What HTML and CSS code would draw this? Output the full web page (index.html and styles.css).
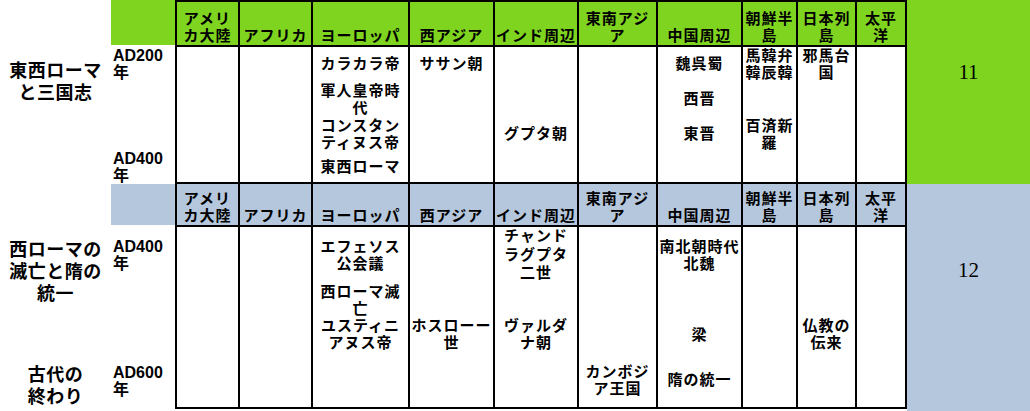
FILE: index.html
```html
<!DOCTYPE html>
<html lang="ja">
<head>
<meta charset="utf-8">
<title>古代の世界年表</title>
<link rel="stylesheet" href="styles.css">
</head>
<body>
<div class="sheet">
  <section class="era era-1">
    <div class="blank"></div>
    <div class="corner"></div>
    <div class="head first">アメリ<br>カ大陸</div>
    <div class="head">アフリカ</div>
    <div class="head">ヨーロッパ</div>
    <div class="head">西アジア</div>
    <div class="head">インド周辺</div>
    <div class="head">東南アジ<br>ア</div>
    <div class="head">中国周辺</div>
    <div class="head">朝鮮半<br>島</div>
    <div class="head">日本列<br>島</div>
    <div class="head">太平<br>洋</div>
    <div class="num">11</div>

    <div class="label top">東西ローマ<br>と三国志</div>
    <div class="year y1">AD200<br>年</div>
    <div class="year y4">AD400<br>年</div>

    <div class="col first"></div>
    <div class="col"></div>
    <div class="col">
      <div class="it r1">カラカラ帝</div>
      <div class="it r2">軍人皇帝時<br>代</div>
      <div class="it r3">コンスタン<br>ティヌス帝</div>
      <div class="it r4">東西ローマ</div>
    </div>
    <div class="col">
      <div class="it r1">ササン朝</div>
    </div>
    <div class="col">
      <div class="it r3">グプタ朝</div>
    </div>
    <div class="col"></div>
    <div class="col">
      <div class="it r1">魏呉蜀</div>
      <div class="it r2">西晋</div>
      <div class="it r3">東晋</div>
    </div>
    <div class="col">
      <div class="it r1">馬韓弁<br>韓辰韓</div>
      <div class="it r3">百済新<br>羅</div>
    </div>
    <div class="col">
      <div class="it r1">邪馬台<br>国</div>
    </div>
    <div class="col"></div>
  </section>

  <section class="era era-2">
    <div class="blank"></div>
    <div class="corner"></div>
    <div class="head first">アメリ<br>カ大陸</div>
    <div class="head">アフリカ</div>
    <div class="head">ヨーロッパ</div>
    <div class="head">西アジア</div>
    <div class="head">インド周辺</div>
    <div class="head">東南アジ<br>ア</div>
    <div class="head">中国周辺</div>
    <div class="head">朝鮮半<br>島</div>
    <div class="head">日本列<br>島</div>
    <div class="head">太平<br>洋</div>
    <div class="num">12</div>

    <div class="label top">西ローマの<br>滅亡と隋の<br>統一</div>
    <div class="label end">古代の<br>終わり</div>
    <div class="year y1">AD400<br>年</div>
    <div class="year y4">AD600<br>年</div>

    <div class="col first"></div>
    <div class="col"></div>
    <div class="col">
      <div class="it r1">エフェソス<br>公会議</div>
      <div class="it r2">西ローマ滅<br>亡</div>
      <div class="it r3">ユスティニ<br>アヌス帝</div>
    </div>
    <div class="col">
      <div class="it r3">ホスローー<br>世</div>
    </div>
    <div class="col">
      <div class="it r1 loose">チャンド<br>ラグプタ<br>二世</div>
      <div class="it r3">ヴァルダ<br>ナ朝</div>
    </div>
    <div class="col">
      <div class="it r4">カンボジ<br>ア王国</div>
    </div>
    <div class="col">
      <div class="it r1">南北朝時代<br>北魏</div>
      <div class="it r3">梁</div>
      <div class="it r4">隋の統一</div>
    </div>
    <div class="col"></div>
    <div class="col">
      <div class="it r3">仏教の<br>伝来</div>
    </div>
    <div class="col"></div>
  </section>
</div>
</body>
</html>
```

FILE: styles.css
```css
* {
  box-sizing: border-box;
  margin: 0;
  padding: 0;
}

html, body {
  width: 1030px;
  height: 411px;
  overflow: hidden;
  background: #ffffff;
}

body {
  font-family: "Liberation Sans", "Noto Sans CJK JP", sans-serif;
  font-weight: 700;
  color: #000000;
}

.era {
  display: grid;
  grid-template-columns: 111px 64px 65px 73px 97px 85px 84px 79px 85px 55px 59px 50px 1fr;
}

.era-1 {
  --band: #7fd41f;
  grid-template-rows: 47px 33px 37px 33px 34px;
}

.era-2 {
  --band: #b5c7dc;
  grid-template-rows: 43px 56px 33px 36px 57px 2px;
}

.blank {
  grid-column: 1;
  grid-row: 1;
}

.corner {
  grid-column: 2;
  grid-row: 1;
  background: var(--band);
  margin-bottom: 2px;
}

.head {
  grid-row: 1;
  background: var(--band);
  border-right: 2px solid #000;
  border-bottom: 2px solid #000;
  display: flex;
  align-items: flex-end;
  justify-content: center;
  text-align: center;
  font-size: 15px;
  line-height: 17px;
  letter-spacing: 1px;
  white-space: nowrap;
  padding-bottom: 1px;
}

.era-1 .head {
  border-top: 2px solid #000;
}

.head.first,
.col.first {
  border-left: 2px solid #000;
}

.num {
  grid-column: 13;
  grid-row: 1 / -1;
  background: var(--band);
  font-family: "Liberation Serif", serif;
  font-weight: 400;
  font-size: 21px;
  line-height: 24px;
  text-align: center;
}

.era-1 .num {
  padding-top: 60px;
}

.era-2 .num {
  padding-top: 74px;
}

.col {
  grid-row: 2 / 6;
  display: grid;
  background: #ffffff;
  border-right: 2px solid #000;
  border-bottom: 2px solid #000;
  font-size: 15px;
  line-height: 17px;
  letter-spacing: 1px;
  white-space: nowrap;
  text-align: center;
}

.era-1 .col {
  grid-template-rows: 33px 37px 33px 1fr;
}

.era-2 .col {
  grid-template-rows: 56px 33px 36px 1fr;
}

.it {
  align-self: center;
}

.it.loose {
  line-height: 18.5px;
}

.r1 { grid-row: 1; }
.r2 { grid-row: 2; }
.r3 { grid-row: 3; }
.r4 { grid-row: 4; }

.year {
  grid-column: 2;
  align-self: center;
  padding-left: 2px;
  font-size: 16px;
  line-height: 17px;
}

.year.y1 { grid-row: 2; }
.year.y4 { grid-row: 5; }

.label {
  grid-column: 1;
  align-self: center;
  text-align: center;
  font-size: 18px;
  line-height: 22px;
  letter-spacing: 0.5px;
  white-space: nowrap;
}

.label.top { grid-row: 2 / 4; }

.label.end {
  grid-row: 5;
  align-self: end;
  padding-bottom: 1px;
}
```
